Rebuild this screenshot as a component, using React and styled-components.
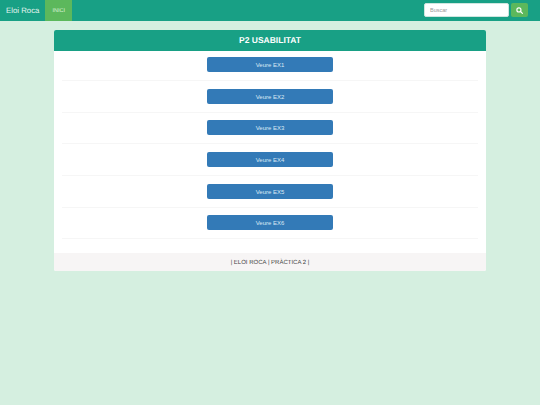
import React from 'react';
import styled, { createGlobalStyle } from 'styled-components';

const GlobalStyle = createGlobalStyle`
  html, body {
    margin: 0;
    min-height: 405px;
    background: #d5efe0;
    font-family: "Liberation Sans", Arial, sans-serif;
    text-rendering: geometricPrecision;
  }
`;

const Navbar = styled.nav`
  height: 21px;
  background: #18a085;
  display: flex;
  align-items: stretch;
  padding: 0 12px 0 6px;
`;

const Brand = styled.div`
  color: #e6f5f0;
  font-size: 7.8px;
  font-weight: normal;
  line-height: 21px;
  margin-right: 6px;
`;

const NavLink = styled.div`
  background: #5cb85c;
  color: #dff3da;
  font-size: 5.5px;
  line-height: 22px;
  height: 21px;
  padding: 0 7px;
`;

const Search = styled.form`
  margin: 3px 0 0 auto;
  display: flex;
  gap: 2px;
  height: 14px;
`;

const SearchInput = styled.input`
  box-sizing: border-box;
  width: 85px;
  height: 14px;
  margin: 0;
  padding: 0 5px;
  border: 1px solid #cfe6df;
  border-radius: 2px;
  background: #fff;
  font-family: inherit;
  font-size: 5.5px;
  &::placeholder {
    color: #999;
    opacity: 1;
  }
`;

const SearchButton = styled.button`
  width: 17px;
  height: 14px;
  padding: 0;
  border: 0;
  border-radius: 2px;
  background: #5cb85c;
  display: flex;
  align-items: center;
  justify-content: center;
`;

const Panel = styled.section`
  width: 432px;
  margin: 9px auto 0;
  background: #fff;
  border-radius: 2px;
  overflow: hidden;
`;

const PanelTitle = styled.h1`
  margin: 0;
  height: 21px;
  background: #18a085;
  color: #fff;
  font-size: 8.5px;
  font-weight: bold;
  line-height: 21px;
  text-align: center;
`;

const PanelBody = styled.div`
  padding: 6px 8px 6px;
`;

const Row = styled.div`
  height: 24px;
  margin-bottom: 7.7px;
  box-sizing: border-box;
  border-bottom: 1px solid #f6f6f6;
  text-align: center;
`;

const ViewButton = styled.button`
  display: block;
  box-sizing: border-box;
  width: 126.5px;
  height: 15px;
  margin: 0 auto;
  padding: 1px 0 0;
  border: 0;
  border-radius: 2px;
  background: #337ab7;
  color: #dbe9f5;
  font-family: inherit;
  font-size: 6px;
  line-height: 14px;
`;

const PanelFooter = styled.footer`
  height: 18px;
  background: #f7f5f5;
  color: #444;
  font-size: 6px;
  line-height: 20px;
  text-align: center;
`;

const exercises = ['Veure EX1', 'Veure EX2', 'Veure EX3', 'Veure EX4', 'Veure EX5', 'Veure EX6'];

export default function App() {
  return (
    <>
      <GlobalStyle />
      <Navbar>
        <Brand>Eloi Roca</Brand>
        <NavLink>INICI</NavLink>
        <Search onSubmit={(e) => e.preventDefault()}>
          <SearchInput placeholder="Buscar" />
          <SearchButton aria-label="Buscar">
            <svg width="7" height="7" viewBox="0 0 24 24" fill="none" stroke="#fff" strokeWidth="4" strokeLinecap="round">
              <circle cx="10" cy="10" r="7" />
              <path d="M15.5 15.5 22 22" />
            </svg>
          </SearchButton>
        </Search>
      </Navbar>
      <Panel>
        <PanelTitle>P2 USABILITAT</PanelTitle>
        <PanelBody>
          {exercises.map((label) => (
            <Row key={label}>
              <ViewButton>{label}</ViewButton>
            </Row>
          ))}
        </PanelBody>
        <PanelFooter>| ELOI ROCA | PRÀCTICA 2 |</PanelFooter>
      </Panel>
    </>
  );
}
